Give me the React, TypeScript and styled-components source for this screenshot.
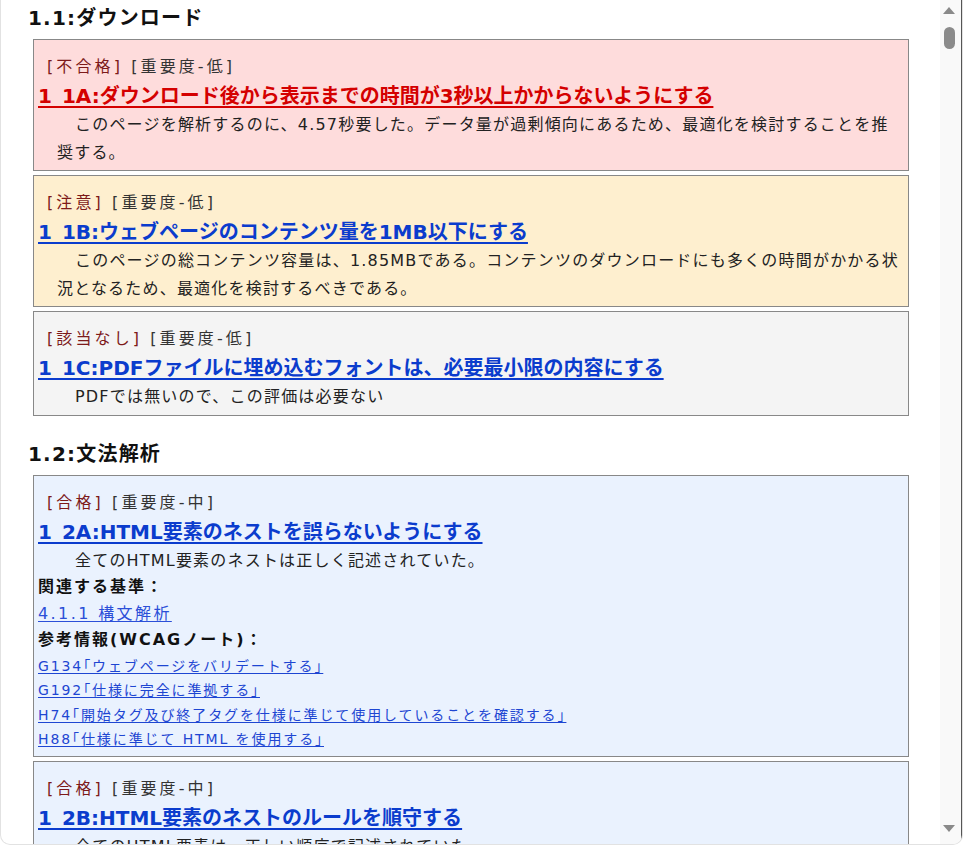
import React from "react";
import styled, { createGlobalStyle } from "styled-components";

const Global = createGlobalStyle`
  html, body { margin: 0; padding: 0; background: #ffffff; }
  body {
    font-family: "DejaVu Sans", "Noto Sans CJK JP", "Noto Sans", sans-serif;
    color: #222;
  }
`;

const Frame = styled.div`
  box-sizing: border-box;
  width: 963px;
  height: 845px;
  border: 1px solid #e2e2e2;
  border-top: none;
  border-radius: 0 0 10px 10px;
  display: flex;
  overflow: hidden;
  background: #fff;
`;

const Content = styled.div`
  flex: 1;
  min-width: 0;
  overflow: hidden;
  padding: 4px 31px 0 27px;
`;

const Heading = styled.h2<{ $first?: boolean }>`
  margin: ${(p) => (p.$first ? "0" : "24px")} 0 7px 0;
  font-size: 20px;
  line-height: 28px;
  font-weight: 700;
  letter-spacing: 1.2px;
  color: #111;
`;

const Card = styled.div<{ $bg: string }>`
  margin: 0 0 4px 5px;
  border: 1px solid #888;
  background: ${(p) => p.$bg};
  padding: 12px 4px 4px 4px;
`;

const Status = styled.div`
  padding-left: 9px;
  font-size: 16px;
  line-height: 30px;
  letter-spacing: 3.1px;
  color: #333;
`;

const Verdict = styled.span`
  color: #7d1a1a;
`;

const Title = styled.a<{ $red?: boolean }>`
  display: block;
  width: fit-content;
  font-size: 20px;
  line-height: 29px;
  font-weight: 700;
  letter-spacing: 0;
  color: ${(p) => (p.$red ? "#d40000" : "#0b3ccd")};
  text-decoration: underline;
  text-underline-offset: 3px;
  text-decoration-thickness: 2px;
`;

const Desc = styled.p`
  margin: 0;
  padding-left: 19px;
  text-indent: 18px;
  font-size: 16px;
  line-height: 27.5px;
  letter-spacing: 1.2px;
  color: #222;
`;

const Label = styled.div`
  font-size: 16px;
  line-height: 26.5px;
  font-weight: 700;
  letter-spacing: 2px;
  color: #111;
`;

const CritLink = styled.a`
  display: block;
  width: fit-content;
  font-size: 16px;
  line-height: 26.5px;
  letter-spacing: 2.4px;
  color: #2b4fd8;
  text-decoration: underline;
  text-underline-offset: 2px;
`;

const RefLink = styled.a`
  display: block;
  width: fit-content;
  font-size: 14px;
  line-height: 24.5px;
  letter-spacing: 1.9px;
  font-feature-settings: "halt";
  color: #1e46d2;
  text-decoration: underline;
  text-underline-offset: 2px;
`;

const ScrollBar = styled.div`
  width: 22px;
  flex: none;
  background: #f9f9f9;
  border-right: 1px solid #555;
  display: flex;
  flex-direction: column;
  align-items: center;
  padding: 7px 0 12px 0;
  box-sizing: border-box;
`;

const Arrow = styled.div<{ $down?: boolean }>`
  width: 0;
  height: 0;
  border-left: 6px solid transparent;
  border-right: 6px solid transparent;
  ${(p) =>
    p.$down
      ? "border-top: 7px solid #8a8a8a;"
      : "border-bottom: 7px solid #8a8a8a;"}
  margin-right: 3px;
`;

const Thumb = styled.div`
  width: 11px;
  height: 22px;
  border-radius: 6px;
  background: #8b8b8b;
  margin: 13px 3px 0 0;
`;

const Spacer = styled.div`
  flex: 1;
`;

type CardData = {
  bg: string;
  verdict: string;
  level: string;
  title: string;
  red?: boolean;
  desc: string;
  extra?: boolean;
};

const section1: CardData[] = [
  {
    bg: "#fedcdc",
    verdict: "[不合格]",
    level: "[重要度-低]",
    title: "1_1A:ダウンロード後から表示までの時間が3秒以上かからないようにする",
    red: true,
    desc: "このページを解析するのに、4.57秒要した。データ量が過剰傾向にあるため、最適化を検討することを推奨する。",
  },
  {
    bg: "#feefcf",
    verdict: "[注意]",
    level: "[重要度-低]",
    title: "1_1B:ウェブページのコンテンツ量を1MB以下にする",
    desc: "このページの総コンテンツ容量は、1.85MBである。コンテンツのダウンロードにも多くの時間がかかる状況となるため、最適化を検討するべきである。",
  },
  {
    bg: "#f4f4f4",
    verdict: "[該当なし]",
    level: "[重要度-低]",
    title: "1_1C:PDFファイルに埋め込むフォントは、必要最小限の内容にする",
    desc: "PDFでは無いので、この評価は必要ない",
  },
];

const section2: CardData[] = [
  {
    bg: "#eaf2fe",
    verdict: "[合格]",
    level: "[重要度-中]",
    title: "1_2A:HTML要素のネストを誤らないようにする",
    desc: "全てのHTML要素のネストは正しく記述されていた。",
    extra: true,
  },
  {
    bg: "#eaf2fe",
    verdict: "[合格]",
    level: "[重要度-中]",
    title: "1_2B:HTML要素のネストのルールを順守する",
    desc: "全てのHTML要素は、正しい順序で記述されていた。",
  },
];

const refs = [
  "G134「ウェブページをバリデートする」",
  "G192「仕様に完全に準拠する」",
  "H74「開始タグ及び終了タグを仕様に準じて使用していることを確認する」",
  "H88「仕様に準じて HTML を使用する」",
];

function ResultCard({ d }: { d: CardData }) {
  return (
    <Card $bg={d.bg}>
      <Status>
        <Verdict>{d.verdict}</Verdict> {d.level}
      </Status>
      <Title href="#" $red={d.red}>
        {d.title}
      </Title>
      <Desc>{d.desc}</Desc>
      {d.extra && (
        <>
          <Label>関連する基準：</Label>
          <CritLink href="#">4.1.1 構文解析</CritLink>
          <Label>参考情報(WCAGノート)：</Label>
          {refs.map((r) => (
            <RefLink href="#" key={r}>
              {r}
            </RefLink>
          ))}
        </>
      )}
    </Card>
  );
}

export default function App() {
  return (
    <>
      <Global />
      <Frame>
        <Content>
          <Heading $first>1.1:ダウンロード</Heading>
          {section1.map((d) => (
            <ResultCard d={d} key={d.title} />
          ))}
          <Heading>1.2:文法解析</Heading>
          {section2.map((d) => (
            <ResultCard d={d} key={d.title} />
          ))}
        </Content>
        <ScrollBar>
          <Arrow />
          <Thumb />
          <Spacer />
          <Arrow $down />
        </ScrollBar>
      </Frame>
    </>
  );
}
